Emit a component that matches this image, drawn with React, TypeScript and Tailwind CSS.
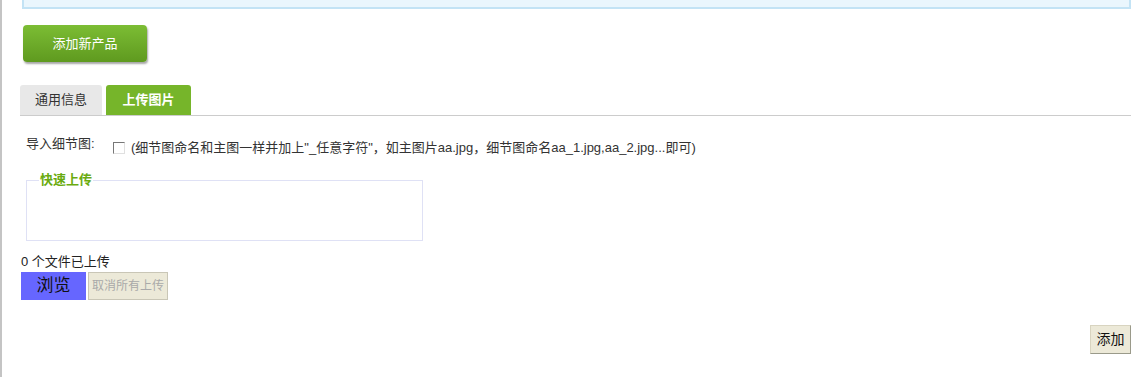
import React, { useState } from 'react';

const font = { fontFamily: '"Liberation Sans", "Noto Sans CJK SC", sans-serif' };

const App: React.FC = () => {
  const [tab, setTab] = useState(1);
  const [checked, setChecked] = useState(false);
  const [count] = useState(0);

  return (
    <div className="w-[1147px] h-[377px] bg-white border-l-2 border-[#c4c4c4] overflow-hidden text-[13px] text-[#333]" style={font}>
      <div className="pl-5 pr-4">
        {/* top notice box */}
        <div className="h-[9px] border-2 border-t-0 border-[#c3e3f5] bg-[#eaf6fd]" />

        <button className="mt-4 ml-[1px] w-[124px] h-[37px] rounded-[4px] bg-gradient-to-b from-[#7cbd34] to-[#5f9a1f] text-white text-[13px] shadow-[1px_2px_2px_rgba(0,0,0,0.35)]">
          添加新产品
        </button>

        {/* tabs */}
        <div className="mt-[23px] flex gap-1 border-b border-[#cccccc] -ml-[2px]">
          <button
            onClick={() => setTab(0)}
            className={`w-[82px] h-[30px] rounded-t-[3px] text-[13px] ${tab === 0 ? 'bg-[#76b52a] text-white font-bold' : 'bg-[#e8e8e8] text-[#333]'}`}
          >
            通用信息
          </button>
          <button
            onClick={() => setTab(1)}
            className={`w-[85px] h-[30px] rounded-t-[3px] text-[13px] ${tab === 1 ? 'bg-[#76b52a] text-white font-bold' : 'bg-[#e8e8e8] text-[#333]'}`}
          >
            上传图片
          </button>
        </div>

        <div className="mt-5 ml-[4px] flex items-start">
          <span className="w-[87px] leading-[15px]">导入细节图:</span>
          <label className="flex items-center gap-[6px] mt-[4px]">
            <input
              type="checkbox"
              checked={checked}
              onChange={() => setChecked(!checked)}
              className="w-[12px] h-[12px] m-0 appearance-none border border-[#777] border-r-[#e0e0e0] border-b-[#e0e0e0] bg-white checked:bg-[#76b52a]"
            />
            <span className="leading-[15px]">(细节图命名和主图一样并加上"_任意字符"，如主图片aa.jpg，细节图命名aa_1.jpg,aa_2.jpg...即可)</span>
          </label>
        </div>

        <fieldset className="mt-[18px] ml-[4px] w-[397px] h-[68px] border border-[#dfe1f5] px-3">
          <legend className="text-[13px] font-bold text-[#6aab10] px-[1px] leading-[14px]">快速上传</legend>
        </fieldset>

        <div className="mt-[13px] -ml-[1px] text-[#222] leading-[15px]">{count} 个文件已上传</div>
        <div className="mt-[3px] -ml-[1px] flex gap-[2px]">
          <button className="w-[65px] h-[28px] bg-[#6666ff] text-[#111] text-[17px]">浏览</button>
          <button className="w-[80px] h-[28px] bg-[#ece9d8] border border-[#c9c6b6] text-[#a9a9a9] text-[12px]" disabled>
            取消所有上传
          </button>
        </div>

        <div className="mt-[25px] flex justify-end">
          <button className="w-[41px] h-[29px] bg-[#ece9d8] border border-[#d8d4c0] border-r-[#9a9a8a] border-b-[#9a9a8a] text-[14px] text-[#111]">
            添加
          </button>
        </div>
      </div>
    </div>
  );
};

export default App;
